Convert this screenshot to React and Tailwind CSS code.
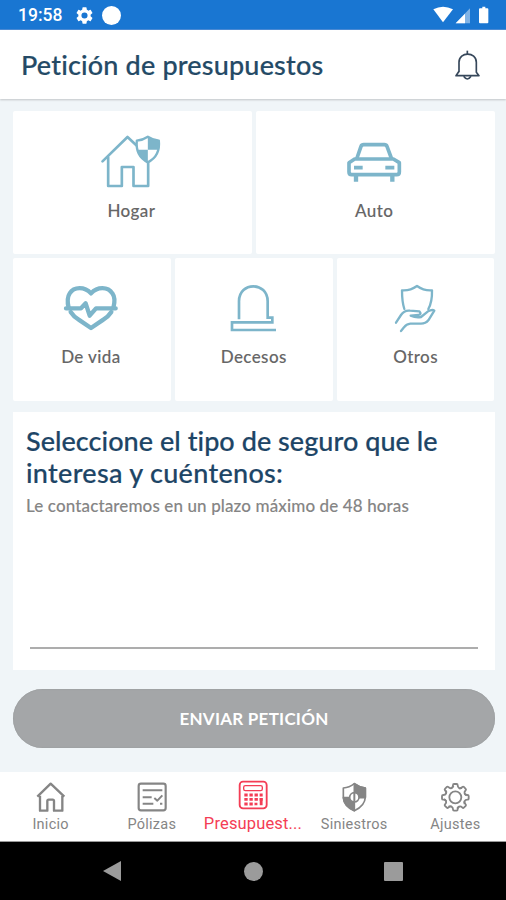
import React from "react";

const BLUE = "#7db5ca";

function HomeShield() {
  return (
    <svg className="h-[70px] w-[90px]" viewBox="-7.5 0 270 210" fill="none" stroke={BLUE} strokeWidth="8" strokeLinejoin="round" strokeLinecap="round">
      <path d="M39 124 L114 51 L142 77" />
      <path d="M56 112 V198 H97 V141 H132 V198 H176 V130" />
      <path d="M175 50 Q190 60 208 62 Q213 108 175 127 Q137 108 142 62 Q160 60 175 50 Z" fill="#fff" strokeWidth="7" />
      <path d="M175 52 Q190 60 207 63 Q209 78 206 89 H175 Z M175 89 V126 Q147 112 143 89 Z" fill={BLUE} stroke="none" />
    </svg>
  );
}

function Car() {
  return (
    <svg className="h-[70px] w-[90px]" viewBox="0 0 270 210" fill="none" stroke={BLUE} strokeWidth="11" strokeLinejoin="round">
      <path d="M80 117 L93 79 Q95 74 101 74 H163 Q169 74 171 79 L185 117" />
      <path d="M74 117 H190 L208 128 V156 Q208 164 200 164 H65 Q57 164 57 156 V128 Z" />
      <path d="M72 143 H98 M166 143 H193" strokeWidth="11" />
      <path d="M78 165 V185 M187 165 V185" strokeWidth="13" />
    </svg>
  );
}

function HeartPulse() {
  return (
    <svg className="h-[70px] w-[90px]" viewBox="-9 -1 270 210" fill="none" stroke={BLUE} strokeWidth="13" strokeLinejoin="round" strokeLinecap="round">
      <path d="M56 116 Q49 87 59 72 C72 51 104 51 123 72 C142 51 174 51 187 72 Q198 87 190 116" />
      <path d="M62 128 Q72 143 86 151 L123 176 L160 151 Q174 143 184 128" />
      <path d="M48 117 H93 L107 102 L119 139 L138 117 H197" />
    </svg>
  );
}

function Tombstone() {
  return (
    <svg className="h-[70px] w-[90px]" viewBox="-3 -1 270 210" fill="none" stroke={BLUE} strokeWidth="8">
      <path d="M87 150 V96 C87 36 173 36 173 96 V145 H187 V159 H66 V182 H198" />
    </svg>
  );
}

function HandShield() {
  return (
    <svg className="h-[70px] w-[90px]" viewBox="1 -1 270 210" fill="none" stroke={BLUE} strokeWidth="7" strokeLinejoin="round" strokeLinecap="round">
      <path d="M101 119 Q94 98 94 63 Q118 65 139 50 Q160 65 184 63 Q185 98 173 119" />
      <path d="M76 160 L91 137 Q101 122 118 124 L146 126 Q154 134 144 137 L120 139 Q136 146 151 143 L172 126 Q185 119 191 124 L173 153 Q165 163 151 163 H119 Q107 164 100 174 L91 185" />
    </svg>
  );
}

function Card({ label, children, className = "pt-[9px]", labelClass = "mt-[11px] pr-[2px]" }) {
  return (
    <button className={"flex h-[143px] flex-col items-center rounded-[2px] bg-white " + className}>
      {children}
      <span className={"text-[17px] leading-[20px] font-medium tracking-[0.4px] text-[#666] [-webkit-text-stroke:0.1px_#666] " + labelClass}>{label}</span>
    </button>
  );
}

function Tab({ label, active, children }) {
  return (
    <div className={"flex w-[101.2px] flex-col items-center " + (active ? "text-[#f43d55]" : "text-[#858585]")}>
      {children}
      <span className={active ? "-mt-px text-[16.5px] leading-[20px] tracking-[0.15px]" : "text-[14.5px] leading-[20px] tracking-[0.25px]"}>{label}</span>
    </div>
  );
}

const tabSvg = {
  className: "h-[41px] w-[40px]",
  fill: "none",
  stroke: "currentColor",
  strokeLinejoin: "round",
};

export default function App() {
  const teeth = Array.from({ length: 8 }, (_, i) => i * 45);
  return (
    <div className="flex h-[900px] w-[506px] flex-col overflow-hidden bg-[#f0f5f8] font-[Lato,sans-serif] [font-variant-ligatures:none]">
      <div className="flex h-[30px] shrink-0 items-center border-b border-[#4b8bd6] bg-[#1976d2] text-white">
        <span className="ml-[18px] w-[46px] pt-[3px] font-[Roboto,sans-serif] text-[17.5px] leading-none font-medium">19:58</span>
        <svg className="mt-[2px] ml-[12px] h-[17px] w-[17px]" viewBox="2 2 20 20" fill="currentColor">
          <path d="M19.14 12.94c.04-.3.06-.61.06-.94s-.02-.64-.07-.94l2.03-1.58a.5.5 0 0 0 .12-.61l-1.92-3.32a.5.5 0 0 0-.59-.22l-2.39.96c-.5-.38-1.03-.7-1.62-.94l-.36-2.54A.48.48 0 0 0 13.92 2.4h-3.84a.47.47 0 0 0-.47.41l-.36 2.54c-.59.24-1.13.57-1.62.94l-2.39-.96a.48.48 0 0 0-.59.22L2.74 8.87a.47.47 0 0 0 .12.61l2.03 1.58c-.05.3-.09.63-.09.94s.02.64.07.94l-2.03 1.58a.5.5 0 0 0-.12.61l1.92 3.32c.12.22.37.29.59.22l2.39-.96c.5.38 1.03.7 1.62.94l.36 2.54c.05.24.24.41.48.41h3.84c.24 0 .44-.17.47-.41l.36-2.54c.59-.24 1.13-.56 1.62-.94l2.39.96c.22.08.47 0 .59-.22l1.92-3.32a.47.47 0 0 0-.12-.61l-2.01-1.58zM12 15.6A3.6 3.6 0 1 1 12 8.4a3.6 3.6 0 0 1 0 7.2z" />
        </svg>
        <div className="mt-[2px] ml-[9px] h-[19px] w-[19px] rounded-full bg-white" />
        <svg className="ml-auto h-[30px] w-[60px]" viewBox="0 0 180 90" fill="currentColor">
          <path d="M1 28 Q30 12 60 28 L30 67 Z" />
          <path d="M111 25 V70 H68 Z" opacity=".45" />
          <path d="M96 41 V70 H68 Z" />
          <path d="M148 20 h9 v5 h6 q3 0 3 3 v39 q0 3 -3 3 h-22 q-3 0 -3 -3 v-39 q0 -3 3 -3 h7z" />
        </svg>
        <div className="w-[13px]" />
      </div>

      <header className="flex h-[69px] shrink-0 items-center justify-between bg-white pr-[23px] pl-[21px] shadow-[0_1px_2px_rgba(0,0,0,0.2)]">
        <h1 className="text-[27px] leading-[32px] font-medium tracking-[0.18px] text-[#244a66] [-webkit-text-stroke:0.2px_#244a66]">Petición de presupuestos</h1>
        <svg className="mt-[2px] h-[32px] w-[32px]" viewBox="594 150 96 96" fill="none" stroke="#36475a" strokeWidth="5">
          <path d="M643 152 V164" />
          <path d="M618 217 V187 C618 154 670 154 670 187 V217 L678 227 H609 L618 214" strokeLinejoin="round" />
          <path d="M632 229 Q643 245 654 229" />
        </svg>
      </header>

      <main className="flex grow flex-col px-[13px] pt-[11.5px]">
        <div className="flex w-[481.5px] flex-col gap-[4px]">
          <div className="grid grid-cols-2 gap-[4px]">
            <Card label="Hogar"><HomeShield /></Card>
            <Card label="Auto"><Car /></Card>
          </div>
          <div className="grid grid-cols-3 gap-[4px]">
            <Card label="De vida" className="pt-[11.5px]" labelClass="mt-[8px] pr-[2px]"><HeartPulse /></Card>
            <Card label="Decesos" className="pt-[11.5px]" labelClass="mt-[8px]"><Tombstone /></Card>
            <Card label="Otros" className="pt-[11.5px]" labelClass="mt-[8px]"><HandShield /></Card>
          </div>
        </div>

        <section className="mt-[11.5px] flex h-[258px] w-[482px] flex-col bg-white px-[13px] pt-[13px]">
          <h2 className="text-[27px] leading-[32px] font-medium tracking-[0.05px] whitespace-nowrap text-[#1d4566] [-webkit-text-stroke:0.2px_#1d4566]">
            Seleccione el tipo de seguro que le
            <br />
            <span className="tracking-[0.3px]">interesa y cuéntenos:</span>
          </h2>
          <p className="mt-[6.5px] text-[17px] leading-[20px] font-medium tracking-[0.12px] whitespace-nowrap text-[#858585] [-webkit-text-stroke:0.1px_#858585]">Le contactaremos en un plazo máximo de 48 horas</p>
          <div className="mx-[4px] mt-auto mb-[21px] h-[2px] bg-[#adadad]" />
        </section>

        <button className="mt-[19px] h-[59px] w-[482px] rounded-full bg-[#a4a6a8] pt-px text-[17px] font-bold tracking-[0.25px] text-white shadow-[inset_0_0_1px_0.5px_#9a9d9f]">ENVIAR PETICIÓN</button>
      </main>

      <nav className="flex h-[70px] shrink-0 border-b border-[#999] bg-white pt-[2px] font-[Roboto,sans-serif]">
        <Tab label="Inicio">
          <svg {...tabSvg} viewBox="93 27 120 123" strokeWidth="7">
            <path d="M112 95 L152 56 L193 95" />
            <path d="M120 92 V137 H142 V108 Q142 104 146 104 H158 Q162 104 162 108 V137 H187 V92" />
          </svg>
        </Tab>
        <Tab label="Pólizas">
          <svg {...tabSvg} viewBox="396 27 120 123" strokeWidth="6.5">
            <rect x="416" y="56" width="81" height="80" rx="7" />
            <path d="M428 76 H487 M428 97 H455 M428 116 H460 M463 99 L472 107 L487 91 M480 116 H487" strokeWidth="6" />
          </svg>
        </Tab>
        <Tab label="Presupuest..." active>
          <svg {...tabSvg} viewBox="699 27 120 123" strokeWidth="5.5">
            <rect x="719" y="50" width="81" height="80" rx="10" />
            <rect x="731" y="62" width="56" height="15" rx="5" strokeWidth="4" />
            <path d="M733 90 H788 M733 103 H788 M733 117 H764" strokeWidth="8.5" strokeDasharray="10 5.3" />
            <path d="M783.5 99 V121 M768 113 V121" strokeWidth="8.5" />
          </svg>
        </Tab>
        <Tab label="Siniestros">
          <svg {...tabSvg} viewBox="244 27 120 123" strokeWidth="5">
            <path d="M305 56 Q321 68 338 69 V96 Q337 123 305 137 Q273 123 272 96 V69 Q290 68 305 56 Z" />
            <path d="M305 56 Q321 68 338 69 V98 H305 Z M305 98 V137 Q273 123 272 98 Z" fill="currentColor" />
            <circle cx="305" cy="97" r="14" fill="#fff" />
            <path d="M305 84 V110" strokeWidth="6" />
          </svg>
        </Tab>
        <Tab label="Ajustes">
          <svg {...tabSvg} viewBox="548 27 120 123" strokeWidth="5.5">
            <circle cx="609" cy="97" r="18" />
            {teeth.map((a) => (
              <path key={a} transform={`rotate(${a} 609 97)`} d="M597.5 69.2 Q602 67 602 61 Q602 57 605 57 H613 Q616 57 616 61 Q616 67 620.5 69.2 Q625 71 629 69" />
            ))}
          </svg>
        </Tab>
      </nav>

      <div className="flex h-[58px] shrink-0 items-center bg-black pl-[102px]">
        <svg className="h-[22px] w-[20px]" viewBox="0 0 20 22" fill="#9b9b9b"><path d="M1 11 L19 1 V21 Z" /></svg>
        <div className="ml-[122px] h-[19px] w-[19px] rounded-full bg-[#9b9b9b]" />
        <div className="ml-[121px] h-[19px] w-[19px] rounded-[1px] bg-[#9b9b9b]" />
      </div>
    </div>
  );
}
